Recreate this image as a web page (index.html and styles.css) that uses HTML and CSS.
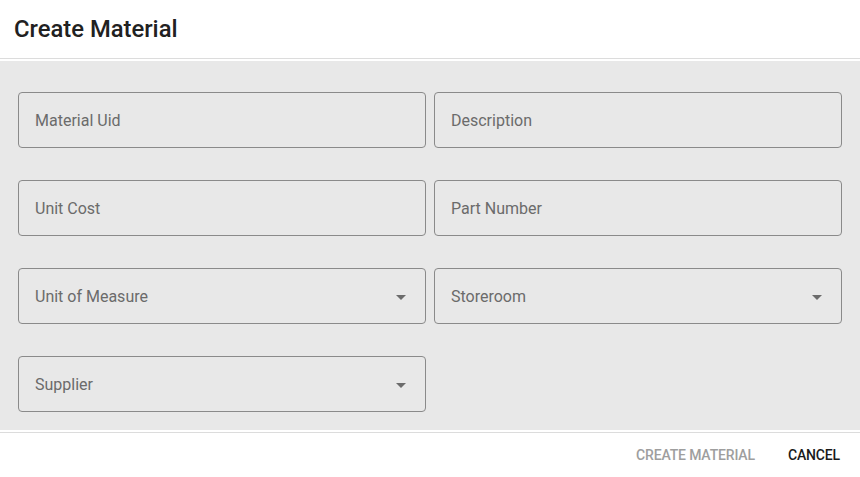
FILE: index.html
```html
<!DOCTYPE html>
<html>
<head>
<meta charset="utf-8">
<link rel="stylesheet" href="styles.css">
</head>
<body>
<div class="dialog">
  <div class="header"><h1 class="title">Create Material</h1></div>
  <div class="content">
    <div class="grid">
      <div class="field"><span class="label">Material Uid</span></div>
      <div class="field"><span class="label">Description</span></div>
      <div class="field"><span class="label">Unit Cost</span></div>
      <div class="field"><span class="label">Part Number</span></div>
      <div class="field select"><span class="label">Unit of Measure</span><span class="arrow"></span></div>
      <div class="field select"><span class="label">Storeroom</span><span class="arrow"></span></div>
      <div class="field select"><span class="label">Supplier</span><span class="arrow"></span></div>
    </div>
  </div>
  <div class="actions">
    <button class="btn disabled">CREATE MATERIAL</button>
    <button class="btn">CANCEL</button>
  </div>
</div>
</body>
</html>
```
FILE: styles.css
```css
* { box-sizing: border-box; }
html, body { margin: 0; padding: 0; background: #fff; }
body { font-family: Roboto, "Noto Sans", sans-serif; width: 860px; height: 477px; overflow: hidden; }
.dialog { display: flex; flex-direction: column; }
.header { height: 61px; }
.header::after { content: ""; display: block; height: 1px; background: #dcdcdc; }
.title { margin: 0; height: 58px; padding: 14px 0 0 14px; font-size: 23.8px; font-weight: 500; line-height: 30px; color: #212121; letter-spacing: 0; }
.content { background: #e8e8e8; height: 369px; padding: 31px 18px 0 18px; }
.grid { display: grid; grid-template-columns: 408px 408px; column-gap: 8px; row-gap: 32px; }
.field { height: 56px; border: 1px solid #8a8a8a; border-radius: 4px; display: flex; align-items: center; padding: 2px 16px 0 16px; position: relative; }
.label { font-size: 16px; color: #6b6b6b; line-height: 20px; }
.arrow { position: absolute; right: 19px; top: 26px; width: 0; height: 0; border-left: 5px solid transparent; border-right: 5px solid transparent; border-top: 5px solid #6b6b6b; }
.actions { border-top: 1px solid #dcdcdc; margin-top: 2px; height: 45px; display: flex; justify-content: flex-end; align-items: center; padding: 0 12px 0 0; }
.btn { background: none; border: none; font-family: Roboto, sans-serif; font-size: 14px; font-weight: 500; color: #1a1a1a; padding: 0 8px; margin-left: 16px; height: 36px; letter-spacing: -0.15px; }
.btn.disabled { color: #9e9e9e; margin-right: 1px; }
```
